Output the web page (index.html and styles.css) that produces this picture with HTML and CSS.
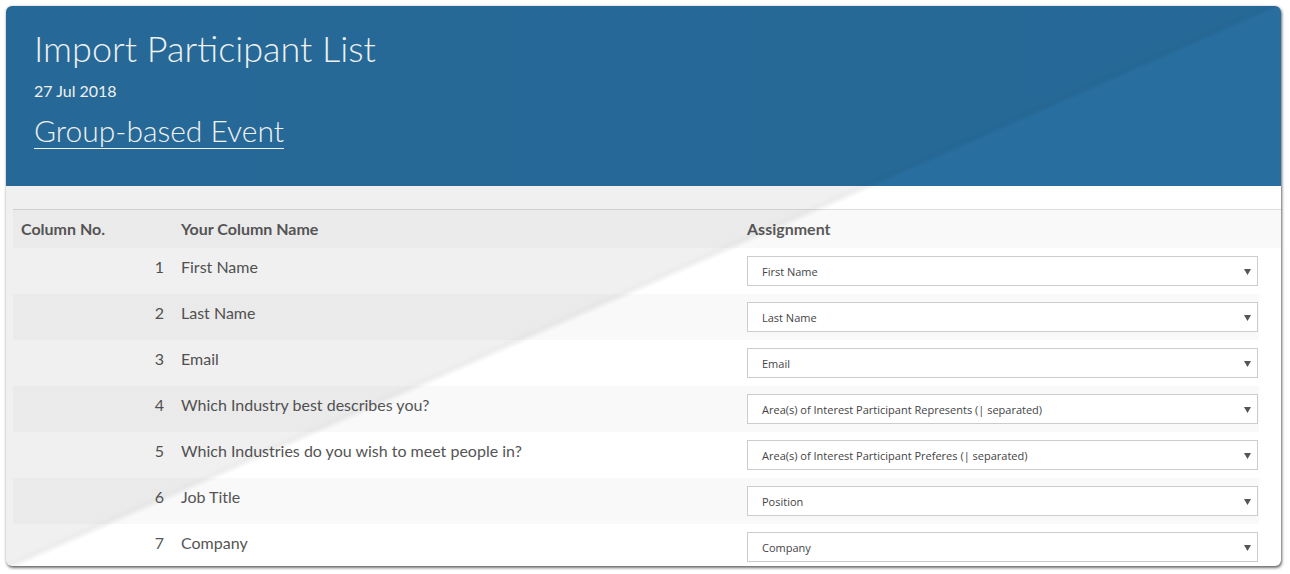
FILE: index.html
```html
<!DOCTYPE html>
<html lang="en">
<head>
<meta charset="utf-8">
<title>Import Participant List</title>
<link rel="stylesheet" href="styles.css">
</head>
<body>
<div class="window">
  <header class="hero">
    <h1 class="title">Import Participant List</h1>
    <div class="date">27 Jul 2018</div>
    <a class="event" href="#">Group-based Event</a>
  </header>
  <main class="content">
    <div class="thead">
      <div class="th">Column No.</div>
      <div class="th th-name">Your Column Name</div>
      <div class="th th-assign">Assignment</div>
      <div class="th"></div>
    </div>
    <div class="tbody">
      <div class="row">
        <div class="num">1</div><div class="name">First Name</div>
        <div class="assign"><div class="select"><span>First Name</span><svg class="caret" viewBox="0 0 7 6"><path d="M0 0H7L3.5 6Z"/></svg></div></div>
      </div>
      <div class="row">
        <div class="num">2</div><div class="name">Last Name</div>
        <div class="assign"><div class="select"><span>Last Name</span><svg class="caret" viewBox="0 0 7 6"><path d="M0 0H7L3.5 6Z"/></svg></div></div>
      </div>
      <div class="row">
        <div class="num">3</div><div class="name">Email</div>
        <div class="assign"><div class="select"><span>Email</span><svg class="caret" viewBox="0 0 7 6"><path d="M0 0H7L3.5 6Z"/></svg></div></div>
      </div>
      <div class="row">
        <div class="num">4</div><div class="name">Which Industry best describes you?</div>
        <div class="assign"><div class="select"><span>Area(s) of Interest Participant Represents (| separated)</span><svg class="caret" viewBox="0 0 7 6"><path d="M0 0H7L3.5 6Z"/></svg></div></div>
      </div>
      <div class="row">
        <div class="num">5</div><div class="name">Which Industries do you wish to meet people in?</div>
        <div class="assign"><div class="select"><span>Area(s) of Interest Participant Preferes (| separated)</span><svg class="caret" viewBox="0 0 7 6"><path d="M0 0H7L3.5 6Z"/></svg></div></div>
      </div>
      <div class="row">
        <div class="num">6</div><div class="name">Job Title</div>
        <div class="assign"><div class="select"><span>Position</span><svg class="caret" viewBox="0 0 7 6"><path d="M0 0H7L3.5 6Z"/></svg></div></div>
      </div>
      <div class="row">
        <div class="num">7</div><div class="name">Company</div>
        <div class="assign"><div class="select"><span>Company</span><svg class="caret" viewBox="0 0 7 6"><path d="M0 0H7L3.5 6Z"/></svg></div></div>
      </div>
    </div>
  </main>
  <div class="sheen"></div>
</div>
</body>
</html>
```

FILE: styles.css
```css
* { box-sizing: border-box; }

html, body {
  margin: 0;
  padding: 0;
  background: #ffffff;
}

body {
  padding: 6px;
  font-family: Lato, "Open Sans", sans-serif;
  color: #555555;
}

.window {
  position: relative;
  width: 1275px;
  height: 560px;
  border-radius: 6px;
  overflow: hidden;
  background: #ffffff;
  box-shadow: 1px 2px 3px rgba(0, 0, 0, 0.55), 0 0 3px rgba(0, 0, 0, 0.18);
}

.hero {
  height: 180px;
  background: #286fa0;
  color: #ffffff;
  padding: 22px 28px 0;
  display: flex;
  flex-direction: column;
  align-items: flex-start;
}

.title {
  margin: 0;
  font-size: 36px;
  line-height: 40px;
  font-weight: 300;
}

.date {
  margin-top: 13px;
  font-size: 16px;
  line-height: 20px;
  font-weight: 400;
}

.event {
  margin-top: 11px;
  font-size: 30px;
  line-height: 36px;
  font-weight: 300;
  color: #ffffff;
  text-decoration: underline;
  text-decoration-thickness: 1px;
  text-underline-offset: 6px;
}

.content {
  padding: 23px 0 0 7px;
}

.thead {
  display: grid;
  grid-template-columns: 160px 567px 519px 1fr;
  border-top: 1px solid #dddddd;
  background: #f9f9f9;
}

.th {
  padding: 8px 8px;
  font-size: 16px;
  line-height: 22px;
  font-weight: 700;
  color: #595959;
}

.th-assign {
  padding-left: 7px;
}

.tbody {
  width: 1246px;
}

.row {
  display: grid;
  grid-template-columns: 160px 567px 519px;
  height: 46px;
}

.row:nth-child(even) {
  background: #f9f9f9;
}

.num, .name {
  padding-top: 8px;
  font-size: 16px;
  line-height: 22.86px;
  color: #555555;
}

.num {
  text-align: right;
  padding-right: 9px;
}

.name {
  padding-left: 8px;
}

.assign {
  padding: 8px 1px 8px 7px;
}

.select {
  height: 30px;
  border: 1px solid #cccccc;
  background: #ffffff;
  display: flex;
  align-items: center;
  justify-content: space-between;
  padding: 1px 6px 0 14px;
  font-family: "Open Sans", "Noto Sans", sans-serif;
  font-size: 11px;
  color: #444444;
}

.caret {
  width: 7px;
  height: 6px;
  fill: #555555;
}

.sheen {
  position: absolute;
  inset: 0;
  pointer-events: none;
  background: linear-gradient(156.1deg,
    rgba(0, 0, 0, 0.06) 0%,
    rgba(0, 0, 0, 0.06) 49.3%,
    rgba(0, 0, 0, 0.075) 49.8%,
    rgba(0, 0, 0, 0) 50.4%);
}
```
